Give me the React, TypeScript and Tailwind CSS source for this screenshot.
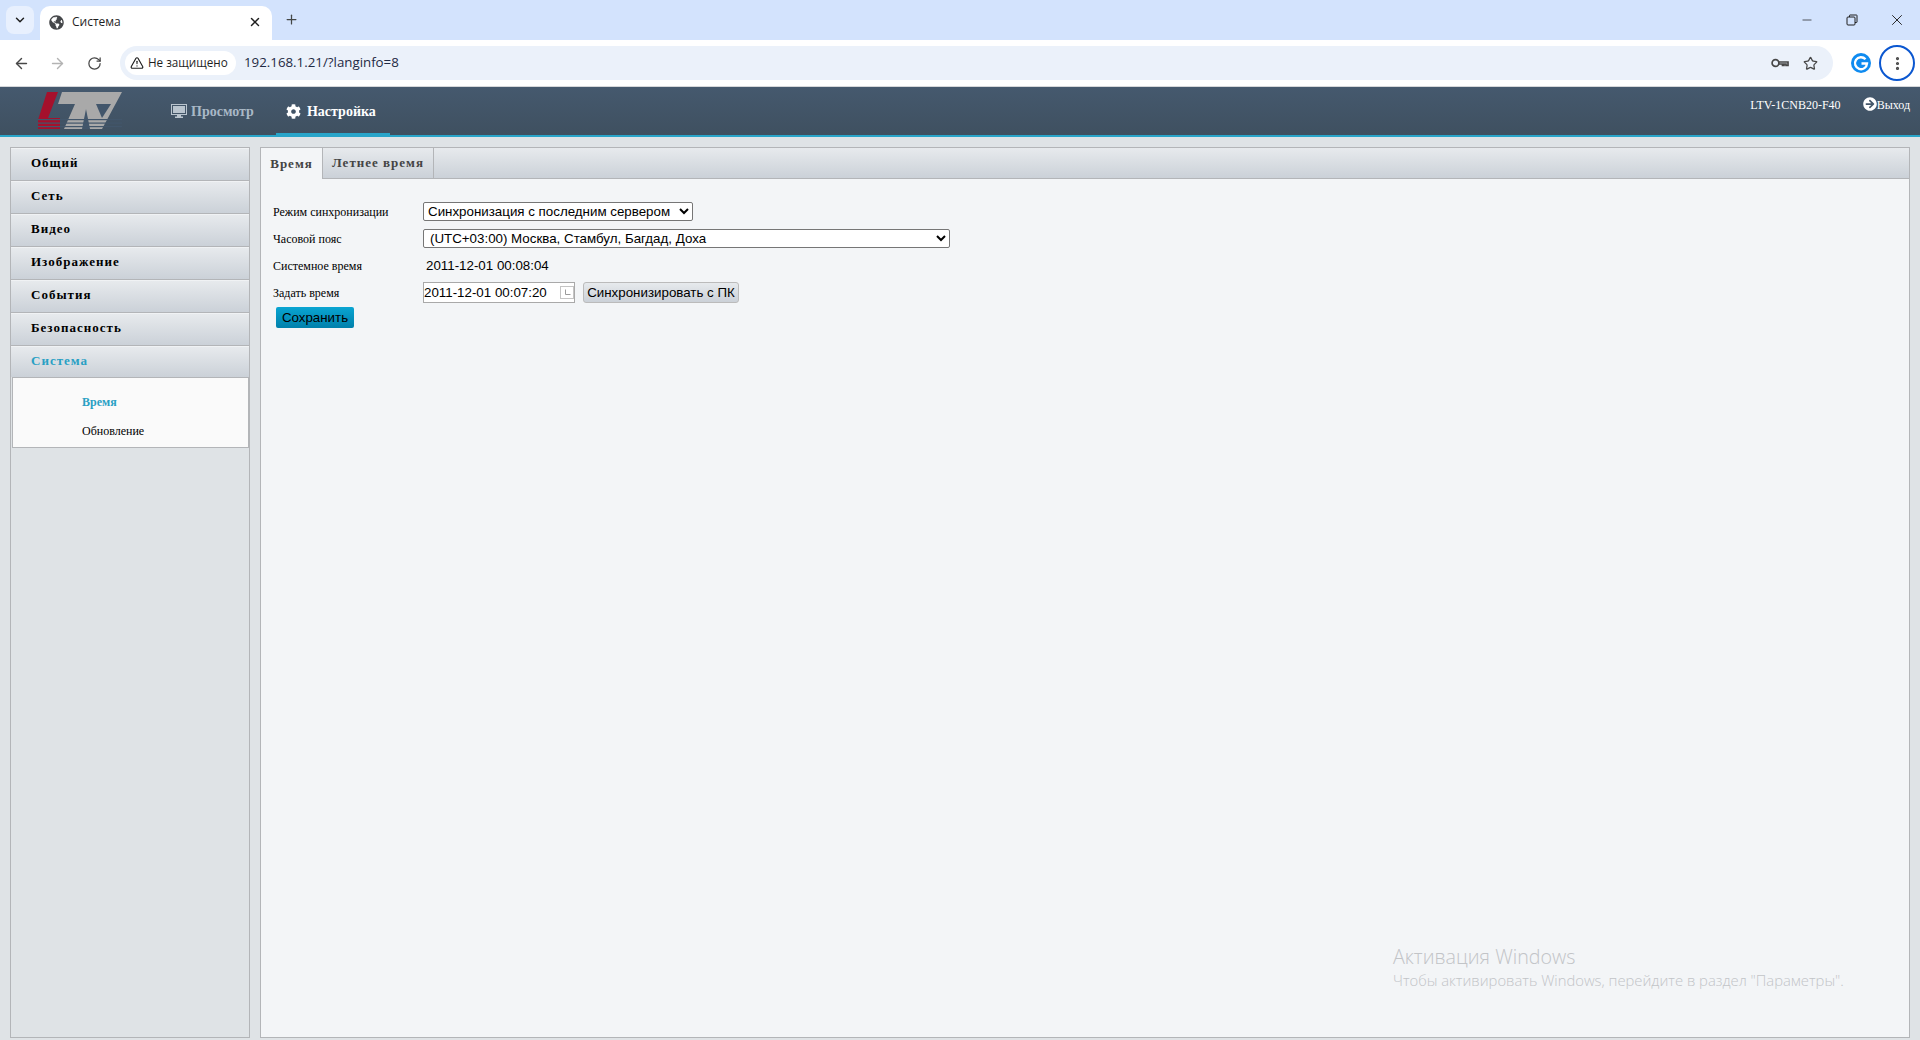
import { ArrowLeft, ArrowRight, ChevronDown, EllipsisVertical, Minus, Plus, RotateCw, Star, TriangleAlert, X } from 'lucide-react';
import { FaArrowCircleRight, FaCog, FaGlobeAmericas } from 'react-icons/fa';

const menu = ['Общий', 'Сеть', 'Видео', 'Изображение', 'События', 'Безопасность'];

const Logo = () => (
  <svg width="84" height="38" viewBox="0 0 84 38" className="block">
    <polygon points="9,0 20,0 10,26 22,26 22,37 0,37 0,28" fill="#a5112c" />
    <polygon points="24,0 84,0 64,37 26,37 37,12 20,12" fill="#a9a9a9" />
    <polygon points="48,17 44,37 52,37" fill="#42566b" />
    <polygon points="58,12 73,12 64,26" fill="#42566b" />
    <rect x="0" y="27" width="84" height="1.2" fill="#42566b" />
    <rect x="0" y="30.500" width="84" height="1.2" fill="#42566b" />
    <rect x="0" y="34" width="84" height="1.2" fill="#42566b" />
  </svg>
);

const Monitor = () => (
  <svg width="16" height="16" viewBox="0 0 16 16" className="shrink-0">
    <rect x="0.500" y="1.500" width="15" height="10" fill="none" stroke="#b9c4ce" />
    <rect x="2" y="3" width="12" height="7" fill="#b9c4ce" />
    <path d="M6 12h4v1.500h2V15H4v-1.500h2z" fill="#b9c4ce" />
  </svg>
);

const BrowserBar = () => (
  <div className="font-['Open_Sans',sans-serif]">
    <div className="h-10 bg-[#d3e3fd] flex items-end pl-[6px]">
      <div className="w-7 h-7 mb-[6px] rounded-lg bg-[#e8f0fe] flex items-center justify-center">
        <ChevronDown size={14} strokeWidth={2.5} className="text-[#1f1f1f]" />
      </div>
      <div className="w-[232px] h-[34px] ml-[6px] bg-white rounded-t-[10px] flex items-center pl-[9px] pr-[10px] pb-[2px]">
        <FaGlobeAmericas size={15} className="text-[#45474a]" />
        <span className="ml-[8px] text-[12px] text-[#1f1f1f] flex-1">Система</span>
        <X size={14} strokeWidth={2.5} className="text-[#1f1f1f]" />
      </div>
      <Plus size={15} strokeWidth={2} className="ml-[12px] mb-[13px] text-[#444746]" />
      <div className="ml-auto flex items-center mb-[11px] pr-[14px] text-[#1f1f1f]">
        <Minus size={14} strokeWidth={1.25} />
        <svg width="12" height="12" viewBox="0 0 12 12" fill="none" stroke="#1f1f1f" className="ml-[32px]">
          <rect x="1" y="3" width="8" height="8" rx="1" />
          <path d="M3.500 3V1.500a.5.5 0 0 1 .5-.5h6.500a.5.5 0 0 1 .5.5V8a.5.5 0 0 1-.5.5H9" />
        </svg>
        <X size={18} strokeWidth={1.25} className="ml-[30px]" />
      </div>
    </div>
    <div className="h-[47px] bg-white border-b border-[#d5d7da] flex items-center pl-[13px] pr-[5px] text-[#474747]">
      <ArrowLeft size={17} strokeWidth={2} />
      <ArrowRight size={17} strokeWidth={2} className="ml-[19px] text-[#b3b3b3]" />
      <RotateCw size={15} strokeWidth={2} className="ml-[21px]" />
      <div className="ml-[18px] flex-1 h-[34px] rounded-full bg-[#ebf1fa] flex items-center pl-[5px] pr-[15px]">
        <div className="h-6 w-[111px] bg-white rounded-full flex items-center pl-[5px] text-[#1f1f1f]">
          <TriangleAlert size={14} strokeWidth={2} />
          <span className="ml-[4px] text-[11.700px] font-medium whitespace-nowrap">Не защищено</span>
        </div>
        <span className="ml-[8px] text-[13.300px] text-[#1f2a44]">192.168.1.21/?langinfo=8</span>
        <svg width="18" height="10" viewBox="0 0 18 10" fill="none" stroke="#474747" strokeWidth="1.7" className="ml-auto">
          <circle cx="4.500" cy="5" r="3.400" />
          <path d="M8 4h9v3.500h-2V6h-2v1.500h-1.500V6H8" />
        </svg>
        <Star size={15} strokeWidth={2} className="ml-[14px]" />
      </div>
      <svg width="20" height="20" viewBox="0 0 20 20" className="ml-[18px]">
        <circle cx="10" cy="10" r="10" fill="#0f8bf0" />
        <path d="M14.500 6.200A6 6 0 1 0 16 10.500H10.500" fill="none" stroke="#fff" strokeWidth="2.400" />
      </svg>
      <div className="ml-[8px] w-9 h-9 rounded-full border-2 border-[#0b57d0] flex items-center justify-center">
        <EllipsisVertical size={17} strokeWidth={2.5} />
      </div>
    </div>
  </div>
);

const Header = () => (
  <div className="h-[50px] bg-gradient-to-b from-[#45596e] to-[#3f5060] border-b-2 border-[#29a5c9] flex pl-[38px] pr-[10px] font-['Liberation_Serif',serif]">
    <div className="mt-[5px]">
      <Logo />
    </div>
    <div className="ml-[49px] flex items-center font-bold text-[14px] text-[#a9b8c6]">
      <Monitor />
      <span className="ml-[4px]">Просмотр</span>
    </div>
    <div className="ml-[22px] w-[114px] h-[50px] border-b-[4px] border-[#29a5c9] pt-[2px] pr-[4px] flex items-center justify-center font-bold text-[14px] text-white">
      <FaCog size={15} />
      <span className="ml-[6px]">Настройка</span>
    </div>
    <div className="ml-auto flex items-start pt-[9px] text-[12px] text-white">
      <span>LTV-1CNB20-F40</span>
      <FaArrowCircleRight size={14} className="ml-[22px] mt-[1px]" />
      <span>Выход</span>
    </div>
  </div>
);

const Sidebar = () => (
  <div className="w-[240px] border border-[#b3b5b8] font-['Liberation_Serif',serif] text-[12px]">
    {menu.map((item) => (
      <div key={item} className="h-[33px] pb-[3px] border-t border-t-[#f0f2f4] border-b border-b-[#b3b5b8] bg-gradient-to-b from-[#e7eaed] to-[#cbd1d8] flex items-center pl-[20px] text-[13px] font-bold tracking-[1px] text-black">
        {item}
      </div>
    ))}
    <div className="h-[31px] pb-[2px] border-t border-t-[#f0f2f4] bg-gradient-to-b from-[#e7eaed] to-[#cbd1d8] flex items-center pl-[20px] text-[13px] font-bold tracking-[1px] text-[#29a0c4]">
      Система
    </div>
    <div className="h-[71px] ml-px bg-[#fafafa] border border-[#b3b5b8] pl-[69px] pt-[15px]">
      <div className="font-bold text-[#29a0c4]">Время</div>
      <div className="mt-[11px] text-black">Обновление</div>
    </div>
  </div>
);

const Label = ({ children }: { children: string }) => (
  <span className="w-[150px] text-[12px] text-black font-['Liberation_Serif',serif]">{children}</span>
);

const Main = () => (
  <div className="relative ml-[10px] flex-1 border border-[#b3b5b8] bg-[#f3f5f7]">
    <div className="h-[31px] bg-gradient-to-b from-[#e7eaed] to-[#cbd1d8] border-b border-[#b3b5b8] flex font-['Liberation_Serif',serif] font-bold text-[13px] tracking-[1px] text-[#444]">
      <div className="w-[62px] h-[31px] bg-[#f3f5f7] border-r border-[#b3b5b8] flex items-center justify-center">Время</div>
      <div className="w-[111px] border-r border-[#b3b5b8] flex items-center justify-center">Летнее время</div>
    </div>
    <div className="pl-[12px] pt-[19px] font-['Liberation_Sans',sans-serif] text-[13.330px] text-black">
      <div className="h-[27px] flex items-center">
        <Label>Режим синхронизации</Label>
        <select className="w-[270px] h-[19px] border border-[#767676] rounded-[2px] bg-white">
          <option>Синхронизация с последним сервером</option>
        </select>
      </div>
      <div className="h-[27px] flex items-center">
        <Label>Часовой пояс</Label>
        <select className="w-[527px] h-[19px] border border-[#767676] rounded-[2px] bg-white pl-[2px]">
          <option>(UTC+03:00) Москва, Стамбул, Багдад, Доха</option>
        </select>
      </div>
      <div className="h-[27px] flex items-center">
        <Label>Системное время</Label>
        <span className="ml-[3px]">2011-12-01 00:08:04</span>
      </div>
      <div className="h-[27px] flex items-center">
        <Label>Задать время</Label>
        <div className="relative w-[152px] h-[21px]">
          <input
            readOnly
            value="2011-12-01 00:07:20"
            className="w-full h-full border border-[#a9a9a9] bg-white pl-0 outline-none"
          />
          <svg width="14" height="14" viewBox="0 0 14 14" fill="none" className="absolute right-[1px] top-[4px]">
            <rect x="0.500" y="0.500" width="13" height="12" fill="#fff" stroke="#c4c4c4" />
            <path d="M5.500 3.500V8.500H10.500" stroke="#9b9b9b" />
          </svg>
        </div>
        <button className="ml-[8px] w-[156px] h-[21px] rounded-[3px] border border-[#bbb] bg-gradient-to-b from-[#e7eaed] to-[#cbd1d8] text-black">
          Синхронизировать с ПК
        </button>
      </div>
      <button className="ml-[3px] mt-[1px] block w-[78px] h-[21px] rounded-[2px] bg-gradient-to-b from-[#0aa5d2] to-[#0080ab] text-black">
        Сохранить
      </button>
    </div>
    <div className="absolute left-[1132px] top-[796px] font-['Open_Sans',sans-serif] font-light text-[#c2c4c7]">
      <div className="text-[19.700px] leading-[26px]">Активация Windows</div>
      <div className="text-[14.800px] leading-[20px]">Чтобы активировать Windows, перейдите в раздел "Параметры".</div>
    </div>
  </div>
);

export default function App() {
  return (
    <div className="h-[1040px] flex flex-col overflow-hidden bg-[#dfe3e6]">
      <BrowserBar />
      <Header />
      <div className="flex-1 flex pl-[10px] pr-[10px] pt-[10px] pb-[2px] min-h-0">
        <Sidebar />
        <Main />
      </div>
    </div>
  );
}
